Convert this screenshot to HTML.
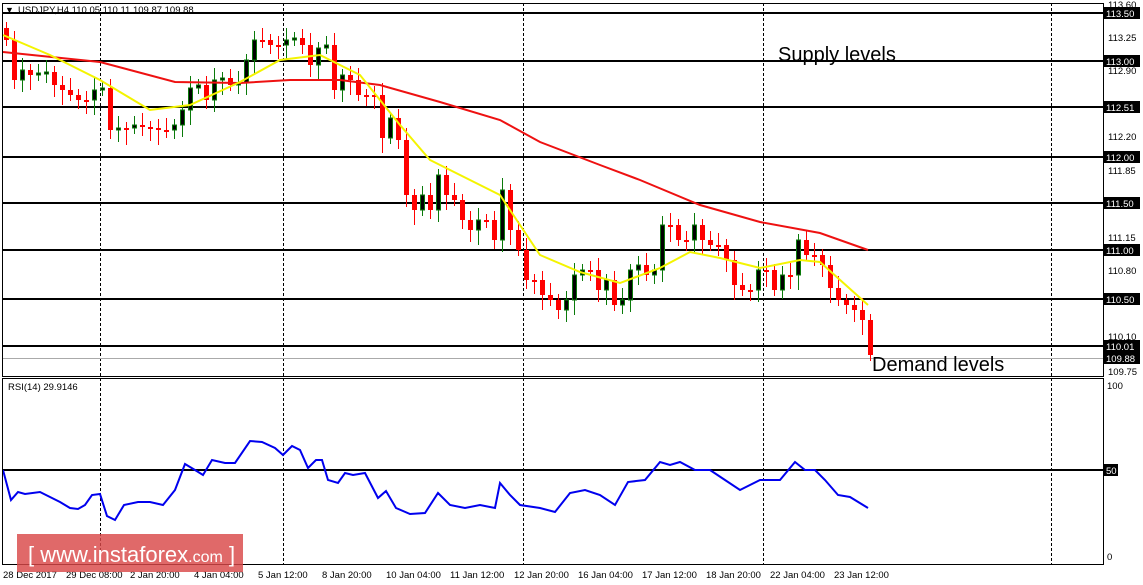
<!DOCTYPE html>
<html><head><meta charset="utf-8"><style>
html,body{margin:0;padding:0;background:#fff;width:1143px;height:585px;overflow:hidden}
svg{display:block}
text{font-family:"Liberation Sans",sans-serif}
</style></head><body>
<svg id="s" width="1143" height="585" xmlns="http://www.w3.org/2000/svg">
<rect width="1143" height="585" fill="#fff"/>
<g stroke="#000" stroke-dasharray="3,2" stroke-width="1">
<line x1="100.5" y1="3" x2="100.5" y2="564"/><line x1="283.5" y1="3" x2="283.5" y2="564"/>
<line x1="523.5" y1="3" x2="523.5" y2="564"/><line x1="763.5" y1="3" x2="763.5" y2="564"/>
<line x1="1051.5" y1="3" x2="1051.5" y2="564"/>
</g>
<g stroke="#000" stroke-width="2">
<line x1="3" y1="13" x2="1103" y2="13"/><line x1="3" y1="61" x2="1103" y2="61"/>
<line x1="3" y1="107" x2="1103" y2="107"/><line x1="3" y1="157" x2="1103" y2="157"/>
<line x1="3" y1="203" x2="1103" y2="203"/><line x1="3" y1="250" x2="1103" y2="250"/>
<line x1="3" y1="299" x2="1103" y2="299"/><line x1="3" y1="346" x2="1103" y2="346"/>
<line x1="3" y1="470" x2="1103" y2="470"/>
</g>
<line x1="3" y1="358.5" x2="1103" y2="358.5" stroke="#aaa"/>
<g id="c"></g>
<polyline fill="none" stroke="#ee1111" stroke-width="2" points="3,52 100,62 175,82 240,83 290,80 340,80 380,85 440,102 500,120 540,142 600,165 640,180 700,205 760,222 820,233 868,250"/>
<polyline fill="none" stroke="#f4f400" stroke-width="2" points="3,35 50,55 100,80 150,110 190,105 240,82 280,60 320,55 360,75 400,125 430,160 460,175 500,195 540,255 580,272 620,283 660,268 690,252 720,258 760,268 800,260 820,262 868,305"/>
<polyline fill="none" stroke="#0000ee" stroke-width="2" points="3,470 11,500 18,492 25,494 40,492 50,497 60,502 70,508 78,509 85,505 92,495 100,494 107,516 115,520 124,505 138,502 150,502 163,505 175,490 185,464 195,470 203,475 212,460 225,463 235,463 250,441 262,442 275,448 283,455 292,446 300,450 308,468 316,460 322,460 328,480 338,483 345,473 353,475 365,473 378,498 386,491 396,508 410,514 425,513 438,493 450,505 465,508 480,505 495,508 500,483 510,495 520,505 540,508 555,512 570,493 585,490 600,495 615,505 628,482 645,480 660,462 670,465 680,462 695,470 710,470 725,480 740,490 760,480 780,480 795,462 805,470 815,470 825,480 838,495 850,497 868,508"/>
<g fill="none" stroke="#000" stroke-width="1">
<rect x="2.5" y="3.5" width="1101" height="373"/>
<rect x="2.5" y="378.5" width="1101" height="186"/>
</g>
<text x="5" y="13" font-size="9">▼</text>
<text x="18" y="13" font-size="9.5">USDJPY,H4  110.05 110.11 109.87 109.88</text>
<text x="8" y="390" font-size="9.5">RSI(14) 29.9146</text>
<text x="778" y="61" font-size="20">Supply levels</text>
<text x="872" y="371" font-size="20">Demand levels</text>
<g font-size="9.5" fill="#000">
<text x="1108" y="8">113.60</text><text x="1108" y="41">113.25</text><text x="1108" y="74">112.90</text>
<text x="1108" y="140">112.20</text><text x="1108" y="174">111.85</text><text x="1108" y="241">111.15</text>
<text x="1108" y="274">110.80</text><text x="1108" y="340">110.10</text><text x="1108" y="375">109.75</text>
<text x="1107" y="389">100</text><text x="1107" y="560">0</text>
</g>
<g id="lb"></g>
<g font-size="9.5" fill="#000">
<text x="3" y="578">28 Dec 2017</text><text x="66" y="578">29 Dec 08:00</text><text x="130" y="578">2 Jan 20:00</text>
<text x="194" y="578">4 Jan 04:00</text><text x="258" y="578">5 Jan 12:00</text><text x="322" y="578">8 Jan 20:00</text>
<text x="386" y="578">10 Jan 04:00</text><text x="450" y="578">11 Jan 12:00</text><text x="514" y="578">12 Jan 20:00</text>
<text x="578" y="578">16 Jan 04:00</text><text x="642" y="578">17 Jan 12:00</text><text x="706" y="578">18 Jan 20:00</text>
<text x="770" y="578">22 Jan 04:00</text><text x="834" y="578">23 Jan 12:00</text>
</g>
<rect x="17" y="534" width="226" height="38" fill="#d94848" fill-opacity="0.82"/>
<text x="28" y="562" font-size="22" fill="#fff">[  www.instaforex<tspan font-size="16">.com</tspan> ]</text>
</svg>
<script>
var ys=[40,80,70,75,73,72,85,90,95,100,100,90,88,130,128,128,125,127,128,130,130,125,110,88,85,100,80,78,85,83,60,40,40,45,45,40,38,45,65,48,45,90,75,80,95,95,95,138,118,140,195,210,195,210,175,195,200,220,230,220,220,240,190,230,250,280,280,295,300,310,300,275,270,270,290,280,305,300,270,265,275,270,225,225,240,240,225,240,245,245,260,285,290,290,270,270,290,275,275,240,255,255,265,288,300,305,310,320,355];
var g=document.getElementById('c'),h='',prev=28;
for(var i=0;i<ys.length;i++){var x=4+8*i,o=prev,c=ys[i];var t=Math.min(o,c),b=Math.max(o,c);if(b-t<2){b=t+2}
var up=c<o;var col=up?'#0a7a0a':'#ff0000';
h+='<line x1="'+(x+2.5)+'" y1="'+(t-6-(i%3)*3)+'" x2="'+(x+2.5)+'" y2="'+(b+6+(i%4)*3)+'" stroke="'+col+'"/>';
h+=up?'<rect x="'+(x+0.5)+'" y="'+t+'" width="4" height="'+(b-t)+'" fill="#000" stroke="#0a7a0a"/>':'<rect x="'+x+'" y="'+t+'" width="5" height="'+(b-t)+'" fill="#ff0000"/>';
prev=c;}
g.innerHTML=h;
var L=[[113.50,13],[113.00,61],[112.51,107],[112.00,157],[111.50,203],[111.00,250],[110.50,299],[110.01,346],[109.88,358]],s='';
L.forEach(function(a){s+='<rect x="1104" y="'+(a[1]-6)+'" width="36" height="12" fill="#000"/><text x="1106" y="'+(a[1]+4)+'" font-size="9.5" fill="#fff">'+a[0].toFixed(2)+'</text>';});
s+='<rect x="1104" y="464" width="14" height="12" fill="#000"/><text x="1106" y="474" font-size="9.5" fill="#fff">50</text>';
document.getElementById('lb').innerHTML=s;
</script>
</body></html>
